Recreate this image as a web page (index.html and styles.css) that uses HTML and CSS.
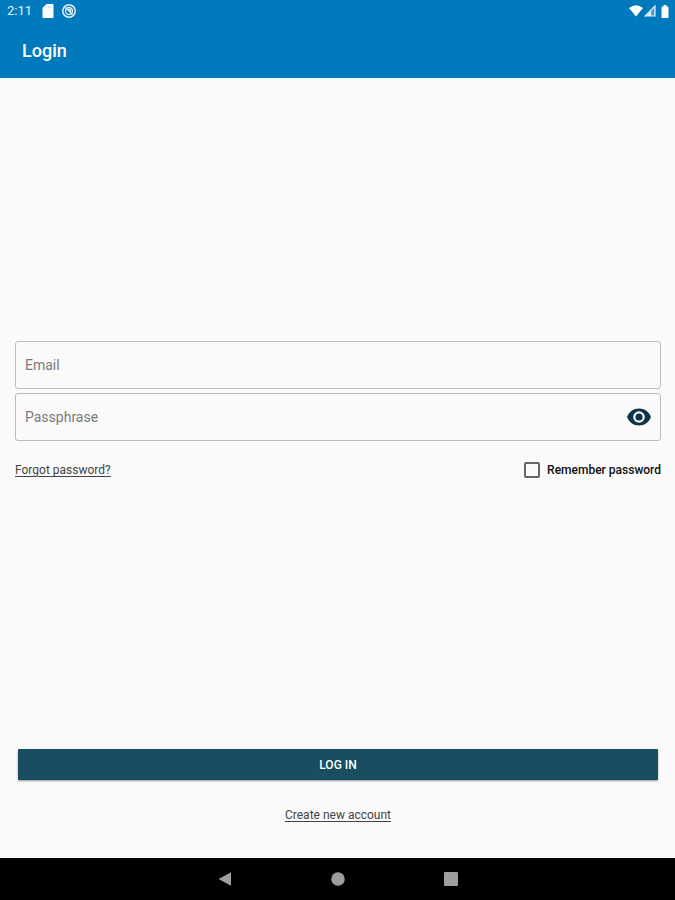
FILE: index.html
```html
<!DOCTYPE html>
<html lang="en">
<head>
    <meta charset="UTF-8">
    <meta name="viewport" content="width=device-width, initial-scale=1.0">
    <title>Login</title>
    <link rel="stylesheet" href="styles.css">
</head>
<body>
    <header class="header">
        <div class="status-bar">
            <div class="status-left">
                <span class="time">2:11</span>
                <svg class="sd-icon" viewBox="0 0 12 14" width="12" height="14">
                    <path d="M4.500 0H10.500Q11.500 0 11.500 1V13Q11.500 14 10.500 14H1.500Q.5 14 .5 13V4Z" fill="#fff"/>
                    <path d="M4.500 2V4M6.500 2V4M8.500 2V4" stroke="#c4e0f1" stroke-width="1"/>
                </svg>
                <svg class="app-icon" viewBox="0 0 14 14" width="14" height="14" fill="none" stroke="#e4f1f9">
                    <circle cx="7" cy="7" r="6.200" stroke-width="1.500"/>
                    <circle cx="7" cy="7" r="3.500" stroke-width="1.300"/>
                    <path d="M3.500 3.500L10.500 10.500M6 5.500H8.500V8" stroke-width="1.300"/>
                </svg>
            </div>
            <div class="status-right">
                <svg viewBox="0 0 14 12" width="14" height="12">
                    <path d="M0 3Q7-2.500 14 3L7 11.500Z" fill="#fff"/>
                </svg>
                <svg viewBox="0 0 12 12" width="12" height="12">
                    <path d="M11 1V11H1Z" fill="#4d9fd0" stroke="#e4f1f9" stroke-width="1.200"/>
                    <path d="M7 6V11H2Z" fill="#e4f1f9"/>
                </svg>
                <svg class="battery-icon" viewBox="0 0 8 13" width="8" height="13">
                    <path d="M2.500 0H5.500V1.500H6.500Q7.500 1.500 7.500 2.500V12Q7.500 13 6.500 13H1.500Q.5 13 .5 12V2.500Q.5 1.500 1.500 1.500H2.500Z" fill="#fff"/>
                </svg>
            </div>
        </div>
        <h1 class="title">Login</h1>
    </header>

    <form class="login-form">
        <div class="fields">
            <div class="form-field">
                <input type="email" id="email" placeholder="Email" aria-label="Email">
            </div>
            <div class="form-field">
                <input type="password" id="passphrase" placeholder="Passphrase" aria-label="Passphrase">
                <button type="button" class="show-btn" aria-label="Show passphrase">
                    <svg viewBox="0 0 24 18" width="24" height="18">
                        <path d="M0 9C2 3.800 6.500 .5 12 .5S22 3.800 24 9C22 14.200 17.500 17.500 12 17.500S2 14.200 0 9Z" fill="#0d3349"/>
                        <circle cx="12" cy="9" r="4.700" fill="#0d3349" stroke="#fafafa" stroke-width="2.200"/>
                    </svg>
                </button>
            </div>
            <div class="options">
                <a href="#" class="link">Forgot password?</a>
                <label class="remember" for="remember">
                    <input type="checkbox" id="remember">
                    Remember password
                </label>
            </div>
        </div>
        <div class="actions">
            <button type="submit" class="btn">LOG IN</button>
            <a href="#" class="link">Create new account</a>
        </div>
    </form>

    <nav class="nav-bar">
        <button type="button" aria-label="Back">
            <svg viewBox="0 0 14 14" width="14" height="14"><path d="M.5 7L13 .3V13.700Z" fill="#9e9e9e"/></svg>
        </button>
        <button type="button" aria-label="Home">
            <svg viewBox="0 0 14 14" width="14" height="14"><circle cx="7" cy="7" r="6.800" fill="#9e9e9e"/></svg>
        </button>
        <button type="button" aria-label="Recent apps">
            <svg viewBox="0 0 14 14" width="14" height="14"><rect width="14" height="14" rx="1" fill="#9e9e9e"/></svg>
        </button>
    </nav>
</body>
</html>
```
FILE: styles.css
```css
*{
    box-sizing: border-box;
    margin: 0;
    padding: 0;
}
body{
    min-height: 100vh;
    display: flex;
    flex-direction: column;
    background-color: #fafafa;
    font-family: Roboto, "Liberation Sans", sans-serif;
    font-size: 12px;
    line-height: 16px;
    color: #111;
}
svg{
    display: block;
}
button{
    border: none;
    background: none;
    font-family: inherit;
    cursor: pointer;
}
.header{
    background-color: #007abc;
    color: white;
}
.status-bar{
    display: flex;
    justify-content: space-between;
    align-items: center;
    height: 22px;
    padding: 0 6px 0 7px;
}
.status-left{
    display: flex;
    align-items: center;
}
.time{
    font-size: 13px;
    color: #e4f1f9;
}
.sd-icon{
    margin-left: 10px;
}
.app-icon{
    margin-left: 8px;
}
.status-right{
    display: flex;
    align-items: center;
    gap: 1px;
}
.battery-icon{
    margin-left: 4px;
}
.title{
    padding: 17px 22px 15px;
    font-size: 18px;
    line-height: 24px;
    font-weight: 500;
}
.login-form{
    flex: 1;
    display: flex;
    flex-direction: column;
}
.fields{
    flex: 1;
    display: flex;
    flex-direction: column;
    justify-content: center;
    padding: 0 14px 0 15px;
}
.form-field{
    display: flex;
    align-items: center;
    height: 48px;
    margin-bottom: 4px;
    padding-left: 9px;
    border: 1px solid #b9bcbc;
    border-radius: 3px;
}
.form-field input{
    flex: 1;
    min-width: 0;
    height: 100%;
    border: none;
    outline: none;
    background: none;
    font-family: inherit;
    font-size: 14px;
}
.form-field input::placeholder{
    color: #7b7b7b;
}
.show-btn{
    padding: 9px;
}
.options{
    display: flex;
    justify-content: space-between;
    align-items: center;
    margin-top: 17px;
}
.link{
    color: #444;
    text-underline-offset: 2px;
}
.remember{
    display: flex;
    align-items: center;
    gap: 7px;
    font-weight: 500;
}
.remember input{
    appearance: none;
    width: 16px;
    height: 16px;
    border: 2px solid #666;
    border-radius: 2px;
}
.remember input:checked{
    background-color: #184e60;
}
.actions{
    display: flex;
    flex-direction: column;
    align-items: center;
    gap: 27px;
    padding: 8px 17px 35px 18px;
}
.btn{
    width: 100%;
    height: 31px;
    border-radius: 1px;
    background-color: #184e60;
    color: white;
    font-size: 12px;
    font-weight: 500;
    box-shadow: 0 1px 2px rgba(0, 0, 0, 0.4);
}
.nav-bar{
    display: flex;
    justify-content: center;
    align-items: center;
    gap: 99px;
    height: 42px;
    background-color: black;
}
```
